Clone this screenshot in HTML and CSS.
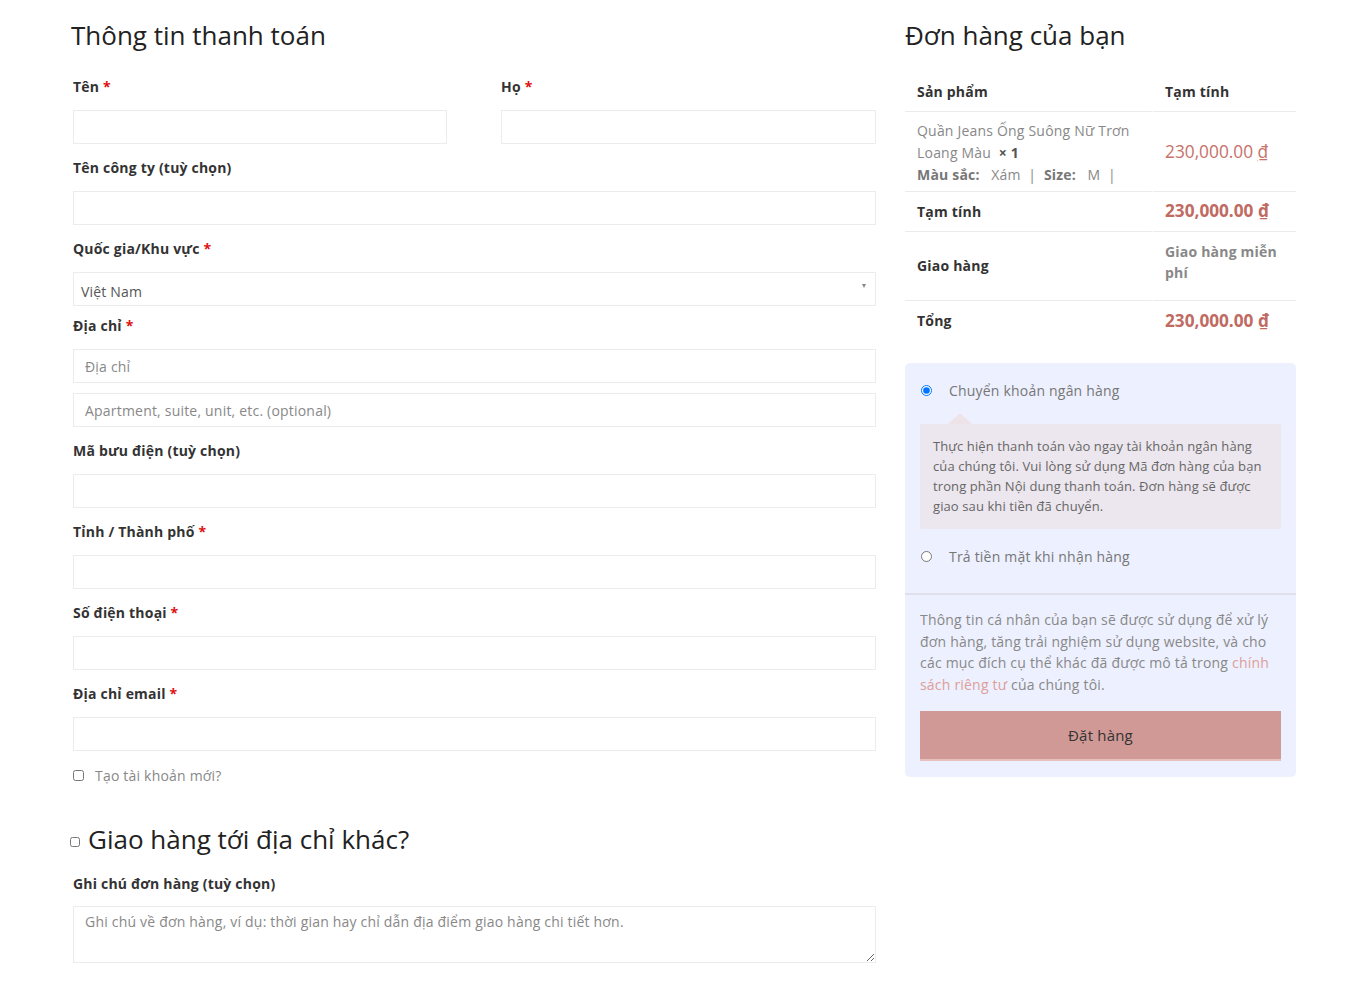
FILE: index.html
```html
<!DOCTYPE html>
<html lang="vi">
<head>
<meta charset="utf-8">
<title>Thanh toán</title>
<link rel="stylesheet" href="styles.css">
</head>
<body>
<div class="page">
  <div class="billing">
    <h3 class="title">Thông tin thanh toán</h3>
    <div class="two">
      <div class="field">
        <label class="lbl">Tên <abbr class="req">*</abbr></label>
        <input class="inp" type="text">
      </div>
      <div class="field">
        <label class="lbl">Họ <abbr class="req">*</abbr></label>
        <input class="inp" type="text">
      </div>
    </div>
    <div class="field">
      <label class="lbl">Tên công ty (tuỳ chọn)</label>
      <input class="inp" type="text">
    </div>
    <div class="field field-select">
      <label class="lbl">Quốc gia/Khu vực <abbr class="req">*</abbr></label>
      <div class="select">Việt Nam</div>
    </div>
    <div class="field">
      <label class="lbl">Địa chỉ <abbr class="req">*</abbr></label>
      <input class="inp" type="text" placeholder="Địa chỉ">
      <input class="inp inp-2" type="text" placeholder="Apartment, suite, unit, etc. (optional)">
    </div>
    <div class="field">
      <label class="lbl">Mã bưu điện (tuỳ chọn)</label>
      <input class="inp" type="text">
    </div>
    <div class="field">
      <label class="lbl">Tỉnh / Thành phố <abbr class="req">*</abbr></label>
      <input class="inp" type="text">
    </div>
    <div class="field">
      <label class="lbl">Số điện thoại <abbr class="req">*</abbr></label>
      <input class="inp" type="text">
    </div>
    <div class="field">
      <label class="lbl">Địa chỉ email <abbr class="req">*</abbr></label>
      <input class="inp" type="text">
    </div>
    <label class="create"><input type="checkbox" class="cb"> <span>Tạo tài khoản mới?</span></label>

    <h3 class="title ship"><input type="checkbox" class="cb cb-ship"><span>Giao hàng tới địa chỉ khác?</span></h3>
    <div class="field">
      <label class="lbl lbl-note">Ghi chú đơn hàng (tuỳ chọn)</label>
      <textarea class="note" placeholder="Ghi chú về đơn hàng, ví dụ: thời gian hay chỉ dẫn địa điểm giao hàng chi tiết hơn."></textarea>
    </div>
  </div>

  <div class="order">
    <h3 class="title">Đơn hàng của bạn</h3>
    <table class="tbl">
      <thead>
        <tr class="r-head"><th>Sản phẩm</th><th>Tạm tính</th></tr>
      </thead>
      <tbody>
        <tr class="r-item">
          <td class="pname"><div class="pline">Quần Jeans Ống Suông Nữ Trơn Loang Màu&nbsp; <strong class="qty">× 1</strong></div>
            <div class="meta"><b>Màu sắc:</b>&nbsp;&nbsp; Xám &nbsp;|&nbsp; <b>Size:</b>&nbsp;&nbsp; M &nbsp;|</div></td>
          <td class="price">230,000.00 <span class="cur">₫</span></td>
        </tr>
        <tr class="r-sub"><th>Tạm tính</th><td class="price bold">230,000.00 <span class="cur">₫</span></td></tr>
        <tr class="r-ship"><th>Giao hàng</th><td class="free">Giao hàng miễn phí</td></tr>
        <tr class="r-total"><th>Tổng</th><td class="price bold">230,000.00 <span class="cur">₫</span></td></tr>
      </tbody>
    </table>

    <div class="payment">
      <div class="methods">
        <label class="method"><input type="radio" name="pm" checked> <span>Chuyển khoản ngân hàng</span></label>
        <div class="desc">Thực hiện thanh toán vào ngay tài khoản ngân hàng của chúng tôi. Vui lòng sử dụng Mã đơn hàng của bạn trong phần Nội dung thanh toán. Đơn hàng sẽ được giao sau khi tiền đã chuyển.</div>
        <label class="method method-2"><input type="radio" name="pm"> <span>Trả tiền mặt khi nhận hàng</span></label>
      </div>
      <div class="place">
        <p class="privacy">Thông tin cá nhân của bạn sẽ được sử dụng để xử lý đơn hàng, tăng trải nghiệm sử dụng website, và cho các mục đích cụ thể khác đã được mô tả trong <a href="#" class="link">chính sách riêng tư</a> của chúng tôi.</p>
        <button class="btn" type="button">Đặt hàng</button>
      </div>
    </div>
  </div>
</div>
</body>
</html>
```

FILE: styles.css
```css
* { box-sizing: border-box; }
html, body { margin: 0; padding: 0; background: #fff; }
body {
  font-family: "Open Sans", "Noto Sans", sans-serif;
  font-size: 14px;
  color: #777;
  letter-spacing: 0.2px;
}
input, textarea, button { letter-spacing: inherit; }
.page {
  display: flex;
  gap: 29px;
  padding: 18px 69px 0 73px;
}
.billing { width: 803px; flex: none; }
.order { width: 391px; flex: none; }

.title {
  margin: 0;
  font-size: 26px;
  line-height: 34px;
  font-weight: 400;
  color: #222;
  letter-spacing: 0;
}
.billing > .title:first-child { margin-left: -2px; }

.two {
  display: grid;
  grid-template-columns: 374px 375px;
  column-gap: 54px;
  margin-top: 24px;
}
.field { display: flex; flex-direction: column; margin-bottom: 13px; }
.lbl {
  font-weight: 700;
  font-size: 14px;
  line-height: 22px;
  color: #333;
  margin-bottom: 12px;
}
.req { color: #e01010; text-decoration: none; border: 0; }
.inp {
  height: 34px;
  border: 1px solid #ececec;
  background: #fff;
  padding: 0 11px;
  font-family: inherit;
  font-size: 14px;
  color: #555;
  outline: none;
}
.inp::placeholder { color: #888; }
.inp-2 { margin-top: 10px; }
.field-select { margin-bottom: 9px; }
.select {
  position: relative;
  height: 34px;
  border: 1px solid #ececec;
  padding: 0 7px;
  line-height: 38px;
  color: #555;
  font-size: 14px;
}
.select::after {
  content: "";
  position: absolute;
  right: 9px;
  top: 11px;
  border-left: 2.5px solid transparent;
  border-right: 2.5px solid transparent;
  border-top: 4px solid #888;
}

.create {
  display: flex;
  align-items: center;
  height: 22px;
  color: #888;
  font-size: 14px;
}
.cb { width: 11px; height: 11px; margin: 0 11px 0 0; }

.ship {
  display: flex;
  align-items: center;
  margin-top: 36px;
  margin-left: -3px;
  margin-bottom: 17px;
}
.cb-ship { width: 10px; height: 10px; margin: 6px 8px 0 0; }
.lbl-note { margin-bottom: 11px; }
.note {
  height: 57px;
  border: 1px solid #ececec;
  padding: 5px 11px;
  font-family: inherit;
  font-size: 14px;
  line-height: 20px;
  resize: vertical;
  outline: none;
}
.note::placeholder { color: #888; }

/* order table */
.tbl {
  width: 100%;
  margin-top: 19px;
  border-collapse: separate;
  border-spacing: 0;
  table-layout: fixed;
}
.tbl th, .tbl td {
  text-align: left;
  vertical-align: middle;
  padding: 0 12px;
  line-height: 22px;
  font-size: 14px;
}
.tbl th { color: #333; font-weight: 700; }
.tbl th:first-child, .tbl td:first-child { width: 248px; }
.tbl tr > * { border-bottom: 1px solid #ebebeb; }
.tbl tr > *:first-child { border-right: 2px solid #fff; }
.tbl tr.r-total > * { border-bottom: 0; }
.r-head > * { height: 41px; padding-top: 1px !important; }
.r-item > * { height: 80px; }
.tbl .r-item .pname { padding-top: 2px; }
.r-sub > * { height: 40px; }
.r-ship > * { height: 69px; }
.r-total > * { height: 40px; }
.pname { color: #888; }
.qty { color: #555; font-weight: 700; }
.meta { color: #888; }
.meta b { color: #777; }
.tbl .price { color: #c7716a; font-size: 17.3px; letter-spacing: 0; }
.tbl .price.bold { font-weight: 700; color: #c06a62; font-size: 17.2px; padding-bottom: 1px; }
.cur { text-decoration: underline; text-underline-offset: 2px; }
.tbl .free { color: #888; font-weight: 700; line-height: 21px; padding-bottom: 8px; }

/* payment */
.payment {
  margin-top: 22px;
  background: #edf0fe;
  border-radius: 5px;
}
.methods {
  padding: 15px 15px 25px;
  border-bottom: 2px solid #dfe0ea;
}
.method {
  display: flex;
  align-items: center;
  height: 24px;
  font-size: 14px;
  color: #777;
}
.method input { margin: 0 17px 0 1px; width: 11px; height: 11px; }
.desc {
  position: relative;
  margin-top: 22px;
  background: #ece6ee;
  padding: 12px 13px 13px;
  font-size: 13px;
  line-height: 20px;
  color: #666;
  border-radius: 2px;
  letter-spacing: 0.1px;
}
.desc::before {
  content: "";
  position: absolute;
  left: 28px;
  top: -11px;
  border-left: 12px solid transparent;
  border-right: 12px solid transparent;
  border-bottom: 11px solid #efe3ea;
}
.method-2 { margin-top: 15px; }
.place { padding: 14px 15px 16px; }
.privacy {
  margin: 0 0 16px;
  font-size: 14px;
  line-height: 21.5px;
  color: #888;
}
.link { color: #dd9e9a; text-decoration: none; }
.btn {
  display: block;
  width: 100%;
  height: 50px;
  border: 0;
  background: #d09995;
  color: #333;
  font-family: inherit;
  font-size: 15px;
  border-bottom: 2px solid #e6c1be;
}
```
